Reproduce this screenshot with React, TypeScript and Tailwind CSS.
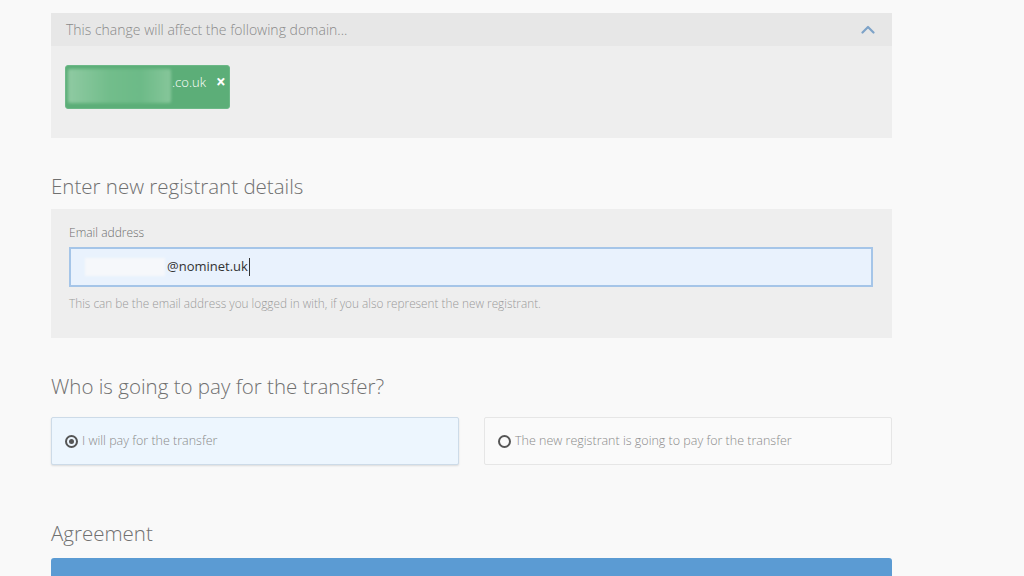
import { useState } from "react";

export default function App() {
  const [payer, setPayer] = useState<"me" | "new">("me");

  return (
    <div
      className="min-h-screen h-[576px] overflow-hidden bg-[#f9f9f9] pt-[13px]"
      style={{ fontFamily: '"Open Sans", "Liberation Sans", sans-serif' }}
    >
      <div className="ml-[51px] w-[841px]">
        {/* Affected domain panel */}
        <section className="bg-[#eeeeee]">
          <div className="flex h-[33px] items-center justify-between bg-[#e7e7e7] pl-[15px] pr-[17px]">
            <span className="text-[14px] font-light text-[#8a8a8a]">
              This change will affect the following domain...
            </span>
            <svg width="14" height="9" viewBox="0 0 14 9" fill="none">
              <path
                d="M1.5 7.5 L7 2 L12.5 7.5"
                stroke="#7ea3c8"
                strokeWidth="2.2"
                strokeLinecap="round"
                strokeLinejoin="round"
              />
            </svg>
          </div>
          <div className="h-[92px] px-[14px] pt-[19px]">
            <div className="flex h-[44px] w-[165px] items-start rounded-[3px] border border-[#6cb887] bg-[#5cae78] pt-[3px] pl-[2px]">
              <div className="h-[34px] w-[103px] rounded-[2px] bg-[linear-gradient(90deg,#8fcaa2,#72bd8b_40%,#6cba87_70%,#86c69a)] blur-[1.5px]" />
              <span className="ml-[1px] mt-[4px] text-[13px] font-light text-white">.co.uk</span>
              <span className="ml-[10px] mt-[4px] text-[17px] font-bold leading-none text-white">
                ×
              </span>
            </div>
          </div>
        </section>

        {/* Registrant details */}
        <h2 className="mt-[34px] text-[20.5px] font-light leading-[28px] text-[#707070]">
          Enter new registrant details
        </h2>
        <section className="mt-[9px] h-[129px] bg-[#eeeeee] px-[18px] pt-[16px]">
          <label className="block text-[12px] font-light leading-[16px] text-[#6f6f6f]">
            Email address
          </label>
          <div className="mt-[6px] flex h-[40px] w-[804px] items-center border-2 border-[#a5c5e8] bg-[#e9f2fd] pl-[14px]">
            <div className="h-[18px] w-[80px] bg-[#f6f8fb] blur-[1px]" />
            <span className="ml-[2px] text-[13px] text-[#333]">@nominet.uk</span>
            <span className="ml-[1px] h-[18px] w-px bg-[#333]" />
          </div>
          <p className="mt-[8px] text-[11.8px] font-light text-[#9a9a9a]">
            This can be the email address you logged in with, if you also represent the new registrant.
          </p>
        </section>

        {/* Payer */}
        <h2 className="mt-[34px] text-[20.5px] font-light leading-[28px] text-[#707070]">
          Who is going to pay for the transfer?
        </h2>
        <div className="mt-[17px] flex gap-[25px]">
          <PayOption
            label="I will pay for the transfer"
            selected={payer === "me"}
            onSelect={() => setPayer("me")}
          />
          <PayOption
            label="The new registrant is going to pay for the transfer"
            selected={payer === "new"}
            onSelect={() => setPayer("new")}
          />
        </div>

        {/* Agreement */}
        <h2 className="mt-[54px] text-[20.5px] font-light leading-[28px] text-[#707070]">
          Agreement
        </h2>
        <div className="mt-[11px] h-[40px] rounded-t-[3px] bg-[#5b9bd3]" />
      </div>
    </div>
  );
}

function PayOption({
  label,
  selected,
  onSelect,
}: {
  label: string;
  selected: boolean;
  onSelect: () => void;
}) {
  return (
    <button
      type="button"
      onClick={onSelect}
      className={
        selected
          ? "flex h-[48px] w-[408px] items-center gap-[4px] rounded-[2px] border border-[#cddbe8] bg-[#edf6fe] pl-[13px] text-left shadow-[0_1px_2px_rgba(0,0,0,0.12)]"
          : "flex h-[48px] w-[408px] items-center gap-[4px] rounded-[2px] border border-[#e6e6e6] bg-[#fafafa] pl-[13px] text-left"
      }
    >
      <span className="flex h-[13px] w-[13px] items-center justify-center rounded-full border-2 border-[#555]">
        {selected && <span className="h-[5px] w-[5px] rounded-full bg-[#555]" />}
      </span>
      <span className="text-[12.5px] font-light text-[#8a8a8a]">{label}</span>
    </button>
  );
}
